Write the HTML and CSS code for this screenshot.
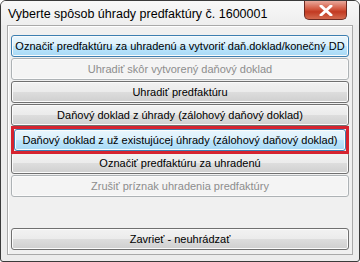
FILE: index.html
```html
<!DOCTYPE html>
<html lang="sk">
<head>
  <meta charset="UTF-8">
  <title>Vyberte spôsob úhrady predfaktúry</title>
  <link rel="stylesheet" href="styles.css">
</head>
<body>
  <div class="window">
    <div class="titlebar">
      <span class="title">Vyberte spôsob úhrady predfaktúry č. 1600001</span>
      <div class="close">
        <svg width="14" height="11" viewBox="0 0 14 11">
          <path d="M2 1 L12 10 M12 1 L2 10" stroke="#fff" stroke-width="3" stroke-linecap="round"/>
        </svg>
      </div>
    </div>
    <div class="client">
      <button class="btn focused">Označiť predfaktúru za uhradenú a vytvoriť daň.doklad/konečný DD</button>
      <button class="btn" disabled>Uhradiť skôr vytvorený daňový doklad</button>
      <button class="btn">Uhradiť predfaktúru</button>
      <button class="btn">Daňový doklad z úhrady (zálohový daňový doklad)</button>
      <div class="marked">
        <button class="btn hover">Daňový doklad z už existujúcej úhrady (zálohový daňový doklad)</button>
      </div>
      <button class="btn">Označiť predfaktúru za uhradenú</button>
      <button class="btn" disabled>Zrušiť príznak uhradenia predfaktúry</button>
      <button class="btn close-btn">Zavrieť - neuhrádzať</button>
    </div>
  </div>
</body>
</html>
```

FILE: styles.css
```css
body {
  margin: 0;
  background: #fff;
  font-family: "Liberation Sans", Arial, sans-serif;
}
.window {
  width: 358px;
  height: 260px;
  border: 1px solid #3a3a3a;
  border-radius: 6px 6px 3px 3px;
  background: #ececec;
  display: flex;
  flex-direction: column;
  overflow: hidden;
}
.titlebar {
  height: 24px;
  display: flex;
  justify-content: space-between;
  align-items: flex-start;
  background: linear-gradient(#f8f8f8, #eeeeee);
}
.title {
  font-size: 12.5px;
  color: #000;
  margin: 6px 0 0 7px;
}
.close {
  width: 41px;
  height: 18px;
  margin-right: 12px;
  border: 1px solid #6b2a22;
  border-top: none;
  border-radius: 0 0 5px 5px;
  background: linear-gradient(#e9a99c, #d2573f 45%, #c23a22 60%, #d46a4f);
  display: flex;
  align-items: center;
  justify-content: center;
}
.client {
  flex: 1;
  margin: 0 6px 6px;
  border: 1px solid #a9a9a9;
  box-shadow: inset 1px 1px 0 #fff;
  background: #f0f0f0;
  padding: 9px 3px 4px;
  display: flex;
  flex-direction: column;
}
.btn {
  height: 22px;
  margin-bottom: 1px;
  padding: 0;
  font-family: "Liberation Sans", Arial, sans-serif;
  font-size: 11px;
  white-space: nowrap;
  color: #000;
  border: 1px solid #707070;
  border-radius: 3px;
  background: linear-gradient(#f2f2f2, #ebebeb 50%, #dddddd 51%, #cfcfcf);
  box-shadow: inset 0 0 0 1px #fbfbfb;
}
.btn.focused {
  border-color: #3c7fb1;
  background: linear-gradient(#eaf6fd, #d9f0fc 50%, #bee6fd 51%, #a7d9f5);
}
.btn.hover {
  width: 100%;
  border-color: #3c7fb1;
  background: linear-gradient(#eaf6fd, #d9f0fc 50%, #bee6fd 51%, #a7d9f5);
}
.btn:disabled {
  color: #8d8d8d;
  border-color: #adb2b5;
  background: #f4f4f4;
}
.marked {
  position: relative;
  z-index: 1;
  border: 3px solid #d5232f;
  margin: -1px 0 -2px;
  display: flex;
}
.marked .btn {
  margin: 0;
}
.close-btn {
  margin-top: auto;
  margin-bottom: 0;
}
```
